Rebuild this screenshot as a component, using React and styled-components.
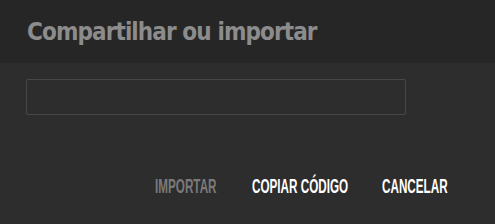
import React from 'react';
import styled, { createGlobalStyle } from 'styled-components';

const Global = createGlobalStyle`
  html, body {
    margin: 0;
    padding: 0;
    background: #2d2d2d;
  }
`;

const Dialog = styled.div`
  width: 495px;
  height: 224px;
  background: #2d2d2d;
  display: flex;
  flex-direction: column;
`;

const Header = styled.div`
  height: 63px;
  background: #262626;
  display: flex;
  align-items: center;
  padding-left: 27px;
  box-sizing: border-box;
`;

const Title = styled.h2`
  margin: 0;
  font-family: "DejaVu Sans Condensed", "DejaVu Sans", sans-serif;
  font-weight: bold;
  font-size: 24px;
  letter-spacing: -0.9px;
  color: #8c8c8c;
`;

const Body = styled.div`
  padding: 16px 26px 0;
`;

const Field = styled.input`
  display: block;
  width: 380px;
  height: 36px;
  box-sizing: border-box;
  background: #2d2d2d;
  border: 1px solid #474747;
  border-radius: 2px;
  outline: none;
  color: #ddd;
`;

const Actions = styled.div`
  display: flex;
  justify-content: flex-end;
  gap: 34px;
  padding: 60px 49px 0 0;
`;

const Action = styled.button`
  background: none;
  border: none;
  padding: 0;
  width: ${({ $w }) => $w}px;
  overflow: visible;
  white-space: nowrap;
  text-align: left;
  font-family: "Liberation Sans", Arial, sans-serif;
  font-weight: bold;
  font-size: 19.5px;
  line-height: 22px;
  color: ${({ disabled }) => (disabled ? '#7a7a7a' : '#ffffff')};
  text-transform: uppercase;
  cursor: pointer;
`;

const Label = styled.span`
  display: inline-block;
  transform: scaleX(0.6);
  transform-origin: left center;
`;

export default function App() {
  return (
    <>
      <Global />
      <Dialog>
        <Header>
          <Title>Compartilhar ou importar</Title>
        </Header>
        <Body>
          <Field />
        </Body>
        <Actions>
          <Action disabled $w={63}><Label>Importar</Label></Action>
          <Action $w={96}><Label>Copiar código</Label></Action>
          <Action $w={64}><Label>Cancelar</Label></Action>
        </Actions>
      </Dialog>
    </>
  );
}
